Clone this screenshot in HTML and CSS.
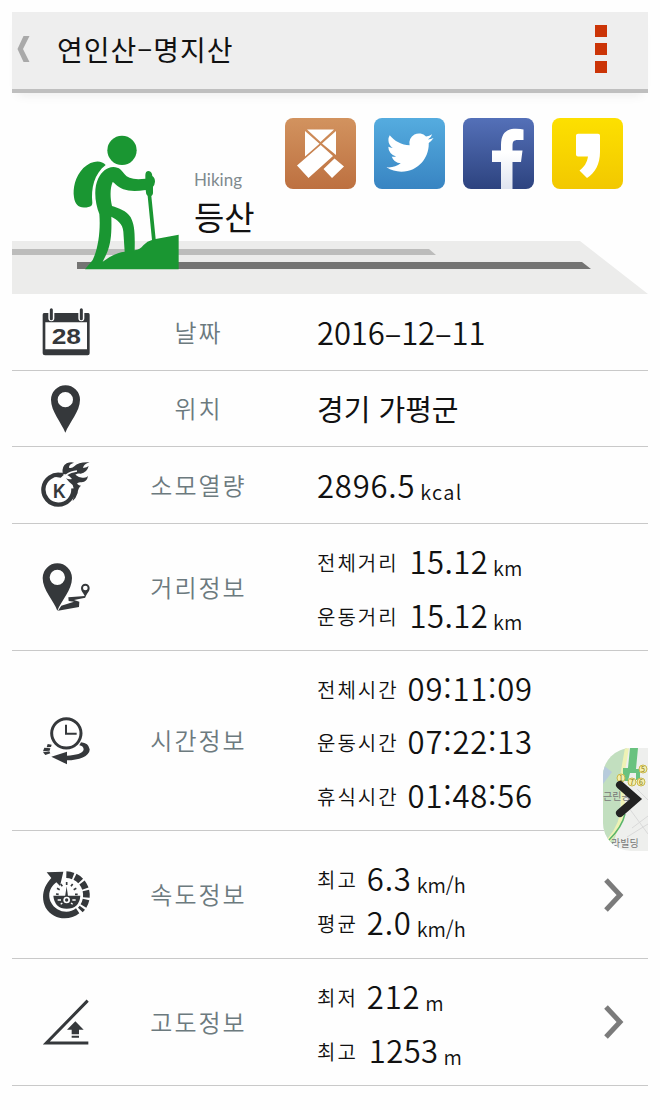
FILE: index.html
```html
<!DOCTYPE html>
<html lang="ko">

<head>
    <meta charset="utf-8">
    <title>연인산–명지산</title>
    <meta name="viewport" content="width=device-width, initial-scale=1">
    <link rel="stylesheet" href="styles.css">
</head>

<body>
    <div class="container">
        <header>
            <svg class="back" viewBox="0 0 13 26"><path d="M6.500 0H12.500L6 13L12.500 26H6.500L0.500 13Z" fill="#a9a9a9" /></svg>
            <h1>연인산–명지산</h1>
            <div class="menu"><i></i><i></i><i></i></div>
        </header>

        <section class="hero">
            <svg class="hero_bg" viewBox="0 0 636 201">
                <path d="M0 148H568L636 201H0Z" fill="#ececeb" />
                <path d="M0 156H417L424 162H0Z" fill="#bcbcbb" />
                <path d="M65 169H570L579 176H65Z" fill="#747473" />
                <!-- 등산 아이콘 -->
                <g transform="translate(48 17) scale(.33333)" fill="#1a9632">
                    <circle cx="186" cy="121" r="44" />
                    <path d="M137 165C124 149 95 150 70 174C45 200 38 235 42 262C45 287 60 298 88 290Q97 288 97 278C93 235 102 192 137 165Z" />
                    <path d="M160 171C178 171 186 182 194 193Q203 206 235 208L256 206V196Q256 183 266 183Q276 184 277 198Q285 203 285 215Q284 225 279 230V250Q278 256 274 258L287 387L356 374V478H75L98 450C115 415 122 360 118 312C105 280 100 235 115 205C125 185 140 172 160 171ZM158 216C150 235 150 262 156 288C175 294 200 302 212 322C224 345 225 370 224 421Q240 419 250 406Q262 393 276 390L263 258Q257 252 257 240Q215 247 190 238C172 230 165 220 158 216ZM154 320C155 360 155 400 138 435L128 455C150 440 170 428 194 425L190 365C188 340 172 330 154 320Z" />
                </g>
            </svg>
            <div class="sport">
                <span>Hiking</span>
                <strong>등산</strong>
            </div>
            <div class="share">
                <svg viewBox="0 0 71 71">
                    <defs><linearGradient id="g1" x2="0" y2="1"><stop stop-color="#d2935f" /><stop offset="1" stop-color="#bd7040" /></linearGradient></defs>
                    <rect width="71" height="71" rx="8" fill="url(#g1)" />
                    <path d="M22 11.500H49L35.500 24ZM20 13L34.500 25.700L20 38.500ZM51 13V37L37 25.500ZM35.700 27L48 38L23.500 60L12 47.500ZM49.500 40.500L59 48.500L47 60L38.500 51Z" fill="#fff" />
                </svg>
                <svg viewBox="0 0 71 71">
                    <defs><linearGradient id="g2" x2="0" y2="1"><stop stop-color="#55acdf" /><stop offset="1" stop-color="#3884c2" /></linearGradient></defs>
                    <rect width="71" height="71" rx="8" fill="url(#g2)" />
                    <path transform="translate(12.500 11) scale(1.960)" fill="#fff" d="M23.953 4.57a10 10 0 01-2.825.775 4.958 4.958 0 002.163-2.723c-.951.555-2.005.959-3.127 1.184a4.92 4.92 0 00-8.384 4.482C7.69 8.095 4.067 6.13 1.64 3.162a4.822 4.822 0 00-.666 2.475c0 1.71.87 3.213 2.188 4.096a4.904 4.904 0 01-2.228-.616v.06a4.923 4.923 0 003.946 4.827 4.996 4.996 0 01-2.212.085 4.936 4.936 0 004.604 3.417 9.867 9.867 0 01-6.102 2.105c-.39 0-.779-.023-1.17-.067a13.995 13.995 0 007.557 2.209c9.053 0 13.998-7.496 13.998-13.985 0-.21 0-.42-.015-.63A9.935 9.935 0 0024 4.59z" />
                </svg>
                <svg viewBox="0 0 71 71">
                    <defs>
                        <linearGradient id="g3" x2="0" y2="1"><stop stop-color="#5470b8" /><stop offset="1" stop-color="#2d437f" /></linearGradient>
                        <linearGradient id="g4" x2="0" y2="1"><stop offset=".4" stop-color="#fff" /><stop offset="1" stop-color="#dfe4f0" /></linearGradient>
                    </defs>
                    <rect width="71" height="71" rx="8" fill="url(#g3)" />
                    <path d="M38 71V44H29V32.500H38V27C38 15.500 43 10.700 53 10.700Q58 10.700 60.500 11.500V22H55C50 22 49.500 24 49.500 28V32.500H59.500L58 44H49.500V71Z" fill="url(#g4)" />
                </svg>
                <svg viewBox="0 0 71 71">
                    <defs><linearGradient id="g5" x2="0" y2="1"><stop stop-color="#fde000" /><stop offset="1" stop-color="#f2c800" /></linearGradient></defs>
                    <rect width="71" height="71" rx="8" fill="url(#g5)" />
                    <path d="M24 17.500Q24 15.700 26 15.700H46Q48 15.700 48 17.500V34C48 46 43 55 35 60L27.500 52.500C32 49 35 45 36 38.500H26Q24 38.500 24 36.500Z" fill="#fff" />
                </svg>
            </div>
        </section>

        <ul class="info">
            <li class="row">
                <svg class="icon" viewBox="31 22 150 150" fill="#35383b">
                    <path d="M40 40H173Q177 40 177 45V161Q177 167 171 167H43Q36 167 36 161V45Q36 40 40 40ZM44 68V149H169V68Z" fill-rule="evenodd" />
                    <path d="M62 31V56M152 31V56" stroke="#fff" stroke-width="18" stroke-linecap="round" />
                    <path d="M62 30V57M152 30V57" stroke="#35383b" stroke-width="9" stroke-linecap="round" />
                    <text x="107" y="132" text-anchor="middle" textLength="88" lengthAdjust="spacingAndGlyphs" class="cal_day">28</text>
                </svg>
                <div class="label">날짜</div>
                <div class="value"><p><b class="date">2016–12–11</b></p></div>
            </li>
            <li class="row low">
                <svg class="icon" viewBox="31 251 150 150" fill="#35383b">
                    <path d="M104 397C92 366 61 333 61 298A43 43 0 0 1 148 298C148 333 116 366 104 397ZM104 275A23 23 0 1 0 104 321A23 23 0 1 0 104 275Z" fill-rule="evenodd" />
                </svg>
                <div class="label">위치</div>
                <div class="value"><p class="place">경기 가평군</p></div>
            </li>
            <li class="row">
                <svg class="icon" viewBox="31 481 150 150" fill="#35383b">
                    <path d="M93 526A45 45 0 1 0 128 566" fill="none" stroke="#35383b" stroke-width="13" />
                    <path d="M71 531Q78 518 96 519L99 526L90 534Z" />
                    <path d="M96 523Q92 500 108 491Q120 486 130 489Q114 494 115 504Q123 508 131 500Q144 486 177 488Q159 493 157 505Q170 504 174 499Q169 519 150 522Q141 520 134 525Q145 534 155 534Q167 536 172 529Q169 547 153 548Q142 546 139 552Q145 558 151 558Q142 565 141 580Q136 596 126 604Q134 575 126 556Q115 548 106 536Q114 540 124 538Q112 523 96 523Z" />
                    <path d="M106 526Q121 515 139 514" fill="none" stroke="#fff" stroke-width="4" />
                    <text x="86" y="596" text-anchor="middle" textLength="38" lengthAdjust="spacingAndGlyphs" class="kcal_k">K</text>
                </svg>
                <div class="label">소모열량</div>
                <div class="value"><p><b>2896.5</b><small class="wide">kcal</small></p></div>
            </li>
            <li class="row tall">
                <svg class="icon" viewBox="31 34 150 150" fill="#35383b">
                    <path d="M80 180C69 149 36 119 36 82A44 44 0 0 1 124 82C124 119 92 149 80 180ZM80 57A23 23 0 1 0 80 103A23 23 0 1 0 80 57Z" fill-rule="evenodd" />
                    <path d="M164 140C160 128 151 123 151 112A13 13 0 0 1 177 112C177 123 168 128 164 140ZM164 105A7 7 0 1 0 164 119A7 7 0 1 0 164 105Z" fill-rule="evenodd" />
                    <path d="M163 136L113 140L114 151L130 153L92 165L82 180L145 169L146 153L130 148L164 141Z" />
                </svg>
                <div class="label">거리정보</div>
                <div class="value">
                    <p><span>전체거리</span><b class="one">15.12</b><small>km</small></p>
                    <p><span>운동거리</span><b class="one">15.12</b><small>km</small></p>
                </div>
            </li>
            <li class="row time">
                <svg class="icon" viewBox="31 496 150 150" fill="#35383b">
                    <circle cx="107" cy="548" r="44" fill="none" stroke="#35383b" stroke-width="9" />
                    <path d="M106 522V549H138" fill="none" stroke="#35383b" stroke-width="6" />
                    <path d="M151 575Q174 577 177 596C178 616 145 628 109 629V641L62 618L109 603V615C135 614 158 609 159 596Q158 586 146 584Z" />
                    <path d="M51 580L63 582L61 589L48 590ZM41 591L59 593L57 600L37 602ZM37 605L56 602L59 608L44 613Z" />
                </svg>
                <div class="label">시간정보</div>
                <div class="value">
                    <p><span>전체시간</span><b>09:11:09</b></p>
                    <p><span>운동시간</span><b>07:22:13</b></p>
                    <p><span>휴식시간</span><b>01:48:56</b></p>
                </div>
            </li>
            <li class="row speed">
                <svg class="icon" viewBox="31 29 150 150" fill="#35383b">
                    <path d="M48 36L98 34L88 77L77 66C61 78 49 100 60 124C75 156 115 162 136 144L146 159C117 182 68 180 45 142C30 113 37 79 62 53Z" />
                    <path d="M107 43A62 62 0 0 1 149 149" fill="none" stroke="#35383b" stroke-width="20" stroke-dasharray="21 6" />
                    <path d="M68 106H149Q146 145 108 145Q72 145 68 106Z" />
                    <path d="M76 101L84 102M79 84L87 88M90 71L95 78M108 65V74M126 71L121 78M137 84L129 88M141 102L133 102" fill="none" stroke="#35383b" stroke-width="5" />
                    <path d="M102 116L108 78L113 116Z" />
                    <circle cx="108" cy="119" r="10" fill="#fff" />
                    <circle cx="108" cy="119" r="5" />
                    <path d="M81 119H91M125 119H135M90 132L95 128M126 132L121 128" stroke="#fff" stroke-width="4" />
                </svg>
                <div class="label">속도정보</div>
                <div class="value">
                    <p><span>최고</span><b>6.3</b><small>km/h</small></p>
                    <p><span>평균</span><b>2.0</b><small>km/h</small></p>
                </div>
                <svg class="arrow" viewBox="0 0 20 34"><path d="M2 2L16 17L2 32" /></svg>
            </li>
            <li class="row tall alt">
                <svg class="icon" viewBox="31 409 150 150" fill="#35383b">
                    <path d="M171 420L47 547H173" fill="none" stroke="#35383b" stroke-width="9" />
                    <path d="M134 482L159 507H145V521H123V507H109ZM123 525H145V531H123Z" />
                </svg>
                <div class="label">고도정보</div>
                <div class="value">
                    <p><span>최저</span><b>212</b><small>m</small></p>
                    <p><span>최고</span><b class="one">1253</b><small>m</small></p>
                </div>
                <svg class="arrow" viewBox="0 0 20 34"><path d="M2 2L16 17L2 32" /></svg>
            </li>
        </ul>

        <!-- 지도 열기 탭 -->
        <svg class="map_tab" viewBox="0 0 45 103">
            <rect width="45" height="103" fill="#eeefed" />
            <path d="M0 0H24L17 34L18 70L8 103H0Z" fill="#c2dfbf" />
            <path d="M0 17L9 24L0 36Z" fill="#b7cbdc" />
            <path d="M24 0L18 34L20 56Q20 76 6 92" fill="none" stroke="#eef2b5" stroke-width="4" />
            <path d="M22 66Q19 79 6 92" fill="none" stroke="#5bb56b" stroke-width="1.500" />
            <path d="M26 60L45 86M29 80L45 68M24 89L45 76M34 41L45 52" stroke="#d9d9d9" fill="none" />
            <path d="M27 0H35L33 21H37V32H33V25H27L25 33H20V20H25Z" fill="#69c27f" />
            <g class="stops">
                <circle cx="40" cy="21" r="4" /><circle cx="18" cy="30" r="4" /><circle cx="29" cy="34" r="4" /><circle cx="38" cy="34" r="4" />
                <text x="40" y="23.500">5</text><text x="18" y="32.500">1</text><text x="29" y="36.500">7</text><text x="38" y="36.500">6</text>
            </g>
            <text x="0" y="52" class="map_txt">근린공</text>
            <text x="8" y="99" class="map_txt">라빌딩</text>
            <path d="M17 37L33 51L17 65" fill="none" stroke="#222" stroke-width="8" stroke-linecap="round" />
        </svg>
    </div>
</body>

</html>
```

FILE: styles.css
```css
* {
    margin: 0;
    padding: 0;
    box-sizing: border-box;
}

body {
    background-color: #fefefe;
    font-family: "Noto Sans CJK KR", sans-serif;
    color: #111;
}

.container {
    position: relative;
    width: 636px;
    margin: 12px 0 0 12px;
}

header {
    display: flex;
    align-items: center;
    height: 81px;
    padding: 0 41px 4px 5px;
    background-color: #eee;
    border-bottom: 4px solid #bfbfbf;
    box-shadow: 0 8px 10px -6px #ececec;
}

.back {
    width: 13px;
    height: 26px;
}

h1 {
    flex: 1;
    margin-left: 27px;
    font-size: 28px;
    font-weight: 400;
    line-height: 40px;
    letter-spacing: 1px;
}

.menu {
    display: grid;
    gap: 6px;
}

.menu i {
    width: 12px;
    height: 12px;
    background-color: #cb3407;
}

.hero {
    position: relative;
    display: flex;
    justify-content: space-between;
    height: 201px;
    padding: 25px 25px 0 182px;
}

.hero_bg {
    position: absolute;
    top: 0;
    left: 0;
    width: 636px;
    height: 201px;
}

.sport {
    position: relative;
    padding-top: 51px;
}

.sport span {
    display: block;
    font-family: Lato, sans-serif;
    font-size: 17px;
    font-weight: 400;
    line-height: 22px;
    color: #808a8e;
}

.sport strong {
    display: block;
    font-size: 33px;
    font-weight: 400;
    line-height: 51px;
}

.share {
    position: relative;
    display: flex;
    gap: 18px;
}

.share svg {
    width: 71px;
    height: 71px;
}

.info {
    list-style-type: none;
}

.row {
    display: grid;
    grid-template-columns: 108px 155px 1fr 44px;
    align-items: center;
    height: 77px;
    border-bottom: 1px solid #c9c9c9;
}

.row.low {
    height: 76px;
}

.row.tall {
    height: 127px;
}

.row.time {
    height: 180px;
}

.row.speed {
    height: 128px;
}

.icon {
    width: 50px;
    height: 50px;
    justify-self: center;
}

.cal_day {
    font-family: "Liberation Sans", sans-serif;
    font-size: 68px;
    font-weight: bold;
}

.kcal_k {
    font-family: "Liberation Sans", sans-serif;
    font-size: 58px;
    font-weight: bold;
}

.label {
    padding: 0 0 2px 2px;
    text-align: center;
    font-size: 24px;
    font-weight: 350;
    letter-spacing: 2px;
    color: #6c7a7e;
}

.value {
    padding-left: 42px;
    white-space: nowrap;
}

.value p {
    display: flex;
    align-items: baseline;
    height: 53.5px;
    line-height: 53.5px;
}

.value b {
    font-size: 31px;
    font-weight: 350;
    letter-spacing: 0.8px;
}

.value .date {
    letter-spacing: -0.1px;
}

.value .one {
    margin-left: 2px;
    letter-spacing: 0.4px;
}

.value span {
    position: relative;
    top: -3px;
    margin-right: 9px;
    font-size: 20px;
    font-weight: 350;
    letter-spacing: 2px;
}

.value small {
    position: relative;
    top: 2px;
    margin-left: 5px;
    font-size: 20px;
    font-weight: 350;
}

.value .wide {
    letter-spacing: 1.3px;
}

.value .place {
    font-size: 29px;
}

.tall .value,
.time .value {
    padding-top: 1px;
}

.speed .value {
    padding-top: 11px;
}

.speed .value p {
    height: 44.5px;
    line-height: 44.5px;
}

.arrow {
    width: 20px;
    height: 34px;
    fill: none;
    stroke: #7b7b7b;
    stroke-width: 5;
}

.map_tab {
    position: absolute;
    top: 736px;
    right: 0;
    width: 45px;
    height: 103px;
    border-radius: 28px 0 0 28px;
}

.map_txt {
    font-size: 10px;
    fill: #777;
}

.stops circle {
    fill: #f4efae;
    stroke: #c9b84c;
}

.stops text {
    font-size: 7px;
    text-anchor: middle;
    fill: #8a7510;
}
```
